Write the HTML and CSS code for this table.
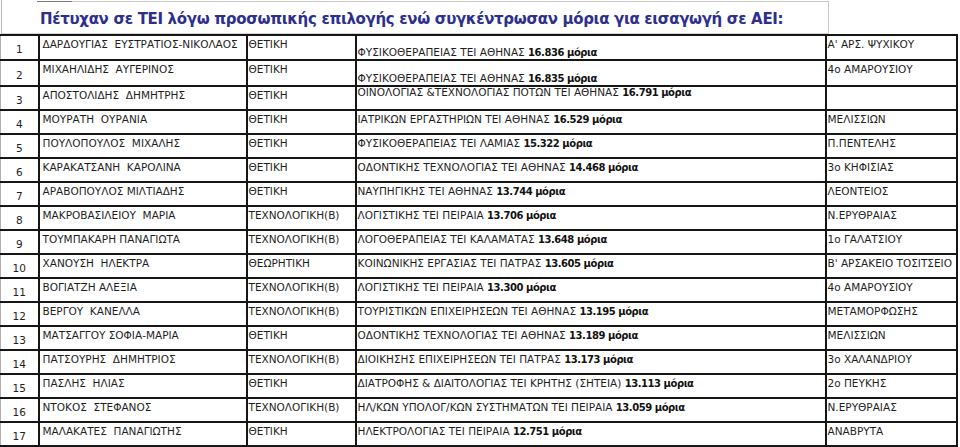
FILE: index.html
```html
<!DOCTYPE html>
<html lang="el">
<head>
<meta charset="utf-8">
<title>Πέτυχαν σε ΤΕΙ</title>
<link rel="stylesheet" href="styles.css">
</head>
<body>
<div class="page">
  <div class="header">
    <div class="title-box">
      <h1 class="title">Πέτυχαν σε ΤΕΙ λόγω προσωπικής επιλογής ενώ συγκέντρωσαν μόρια για εισαγωγή σε ΑΕΙ:</h1>
    </div>
  </div>
  <table class="results">
    <colgroup>
      <col class="c-num"><col class="c-name"><col class="c-dir"><col class="c-school"><col class="c-lyc">
    </colgroup>
    <tbody>
      <tr><td class="num">1</td><td class="txt">ΔΑΡΔΟΥΓΙΑΣ  ΕΥΣΤΡΑΤΙΟΣ-ΝΙΚΟΛΑΟΣ</td><td class="dir">ΘΕΤΙΚΗ</td><td class="school low">ΦΥΣΙΚΟΘΕΡΑΠΕΙΑΣ ΤΕΙ ΑΘΗΝΑΣ <b>16.836 μόρια</b></td><td class="lyc">Α' ΑΡΣ. ΨΥΧΙΚΟΥ</td></tr>
      <tr><td class="num">2</td><td class="txt">ΜΙΧΑΗΛΙΔΗΣ  ΑΥΓΕΡΙΝΟΣ</td><td class="dir">ΘΕΤΙΚΗ</td><td class="school lower">ΦΥΣΙΚΟΘΕΡΑΠΕΙΑΣ ΤΕΙ ΑΘΗΝΑΣ <b>16.835 μόρια</b></td><td class="lyc">4ο ΑΜΑΡΟΥΣΙΟΥ</td></tr>
      <tr><td class="num">3</td><td class="txt">ΑΠΟΣΤΟΛΙΔΗΣ  ΔΗΜΗΤΡΗΣ</td><td class="dir">ΘΕΤΙΚΗ</td><td class="school high">ΟΙΝΟΛΟΓΙΑΣ &amp;ΤΕΧΝΟΛΟΓΙΑΣ ΠΟΤΩΝ ΤΕΙ ΑΘΗΝΑΣ <b>16.791 μόρια</b></td><td class="lyc"></td></tr>
      <tr><td class="num">4</td><td class="txt">ΜΟΥΡΑΤΗ  ΟΥΡΑΝΙΑ</td><td class="dir">ΘΕΤΙΚΗ</td><td class="school">ΙΑΤΡΙΚΩΝ ΕΡΓΑΣΤΗΡΙΩΝ ΤΕΙ ΑΘΗΝΑΣ <b>16.529 μόρια</b></td><td class="lyc">ΜΕΛΙΣΣΙΩΝ</td></tr>
      <tr><td class="num">5</td><td class="txt">ΠΟΥΛΟΠΟΥΛΟΣ  ΜΙΧΑΛΗΣ</td><td class="dir">ΘΕΤΙΚΗ</td><td class="school">ΦΥΣΙΚΟΘΕΡΑΠΕΙΑΣ ΤΕΙ ΛΑΜΙΑΣ <b>15.322 μόρια</b></td><td class="lyc">Π.ΠΕΝΤΕΛΗΣ</td></tr>
      <tr><td class="num">6</td><td class="txt">ΚΑΡΑΚΑΤΣΑΝΗ  ΚΑΡΟΛΙΝΑ</td><td class="dir">ΘΕΤΙΚΗ</td><td class="school">ΟΔΟΝΤΙΚΗΣ ΤΕΧΝΟΛΟΓΙΑΣ ΤΕΙ ΑΘΗΝΑΣ <b>14.468 μόρια</b></td><td class="lyc">3ο ΚΗΦΙΣΙΑΣ</td></tr>
      <tr><td class="num">7</td><td class="txt">ΑΡΑΒΟΠΟΥΛΟΣ ΜΙΛΤΙΑΔΗΣ</td><td class="dir">ΘΕΤΙΚΗ</td><td class="school">ΝΑΥΠΗΓΙΚΗΣ ΤΕΙ ΑΘΗΝΑΣ <b>13.744 μόρια</b></td><td class="lyc">ΛΕΟΝΤΕΙΟΣ</td></tr>
      <tr><td class="num">8</td><td class="txt">ΜΑΚΡΟΒΑΣΙΛΕΙΟΥ  ΜΑΡΙΑ</td><td class="dir">ΤΕΧΝΟΛΟΓΙΚΗ(Β)</td><td class="school">ΛΟΓΙΣΤΙΚΗΣ ΤΕΙ ΠΕΙΡΑΙΑ <b>13.706 μόρια</b></td><td class="lyc">Ν.ΕΡΥΘΡΑΙΑΣ</td></tr>
      <tr><td class="num">9</td><td class="txt">ΤΟΥΜΠΑΚΑΡΗ ΠΑΝΑΓΙΩΤΑ</td><td class="dir">ΤΕΧΝΟΛΟΓΙΚΗ(Β)</td><td class="school">ΛΟΓΟΘΕΡΑΠΕΙΑΣ ΤΕΙ ΚΑΛΑΜΑΤΑΣ <b>13.648 μόρια</b></td><td class="lyc">1ο ΓΑΛΑΤΣΙΟΥ</td></tr>
      <tr><td class="num">10</td><td class="txt">ΧΑΝΟΥΣΗ  ΗΛΕΚΤΡΑ</td><td class="dir">ΘΕΩΡΗΤΙΚΗ</td><td class="school">ΚΟΙΝΩΝΙΚΗΣ ΕΡΓΑΣΙΑΣ ΤΕΙ ΠΑΤΡΑΣ <b>13.605 μόρια</b></td><td class="lyc">Β' ΑΡΣΑΚΕΙΟ ΤΟΣΙΤΣΕΙΟ</td></tr>
      <tr><td class="num">11</td><td class="txt">ΒΟΓΙΑΤΖΗ ΑΛΕΞΙΑ</td><td class="dir">ΤΕΧΝΟΛΟΓΙΚΗ(Β)</td><td class="school">ΛΟΓΙΣΤΙΚΗΣ ΤΕΙ ΠΕΙΡΑΙΑ <b>13.300 μόρια</b></td><td class="lyc">4ο ΑΜΑΡΟΥΣΙΟΥ</td></tr>
      <tr><td class="num">12</td><td class="txt">ΒΕΡΓΟΥ  ΚΑΝΕΛΛΑ</td><td class="dir">ΤΕΧΝΟΛΟΓΙΚΗ(Β)</td><td class="school">ΤΟΥΡΙΣΤΙΚΩΝ ΕΠΙΧΕΙΡΗΣΕΩΝ ΤΕΙ ΑΘΗΝΑΣ <b>13.195 μόρια</b></td><td class="lyc">ΜΕΤΑΜΟΡΦΩΣΗΣ</td></tr>
      <tr><td class="num">13</td><td class="txt">ΜΑΤΣΑΓΓΟΥ ΣΟΦΙΑ-ΜΑΡΙΑ</td><td class="dir">ΘΕΤΙΚΗ</td><td class="school">ΟΔΟΝΤΙΚΗΣ ΤΕΧΝΟΛΟΓΙΑΣ ΤΕΙ ΑΘΗΝΑΣ <b>13.189 μόρια</b></td><td class="lyc">ΜΕΛΙΣΣΙΩΝ</td></tr>
      <tr><td class="num">14</td><td class="txt">ΠΑΤΣΟΥΡΗΣ  ΔΗΜΗΤΡΙΟΣ</td><td class="dir">ΤΕΧΝΟΛΟΓΙΚΗ(Β)</td><td class="school">ΔΙΟΙΚΗΣΗΣ ΕΠΙΧΕΙΡΗΣΕΩΝ ΤΕΙ ΠΑΤΡΑΣ <b>13.173 μόρια</b></td><td class="lyc">3ο ΧΑΛΑΝΔΡΙΟΥ</td></tr>
      <tr><td class="num">15</td><td class="txt">ΠΑΣΛΗΣ  ΗΛΙΑΣ</td><td class="dir">ΘΕΤΙΚΗ</td><td class="school">ΔΙΑΤΡΟΦΗΣ &amp; ΔΙΑΙΤΟΛΟΓΙΑΣ ΤΕΙ ΚΡΗΤΗΣ (ΣΗΤΕΙΑ) <b>13.113 μόρια</b></td><td class="lyc">2ο ΠΕΥΚΗΣ</td></tr>
      <tr><td class="num">16</td><td class="txt">ΝΤΟΚΟΣ  ΣΤΕΦΑΝΟΣ</td><td class="dir">ΤΕΧΝΟΛΟΓΙΚΗ(Β)</td><td class="school">ΗΛ/ΚΩΝ ΥΠΟΛΟΓ/ΚΩΝ ΣΥΣΤΗΜΑΤΩΝ ΤΕΙ ΠΕΙΡΑΙΑ <b>13.059 μόρια</b></td><td class="lyc">Ν.ΕΡΥΘΡΑΙΑΣ</td></tr>
      <tr><td class="num">17</td><td class="txt">ΜΑΛΑΚΑΤΕΣ  ΠΑΝΑΓΙΩΤΗΣ</td><td class="dir">ΘΕΤΙΚΗ</td><td class="school">ΗΛΕΚΤΡΟΛΟΓΙΑΣ ΤΕΙ ΠΕΙΡΑΙΑ <b>12.751 μόρια</b></td><td class="lyc">ΑΝΑΒΡΥΤΑ</td></tr>
    </tbody>
  </table>
</div>
</body>
</html>
```

FILE: styles.css
```css
html, body {
  margin: 0;
  padding: 0;
  background: #ffffff;
}

.page {
  width: 957px;
  font-family: "DejaVu Sans", Verdana, sans-serif;
  color: #1e1e1e;
}

.header {
  width: 828px;
  height: 34px;
  border-left: 1px solid #b8b8b8;
  border-bottom: 1px solid #d0d0d0;
  margin-left: 1px;
  box-sizing: border-box;
  padding-top: 1px;
}

.title-box {
  margin-left: 35px;
  height: 32px;
  box-sizing: border-box;
  border-top: 1px solid #c8c8c8;
  border-right: 1px solid #c8c8c8;
  position: relative;
}

.title-box::before {
  content: "";
  position: absolute;
  left: 0;
  top: -1px;
  width: 35px;
  height: 1px;
  background: #7a7a7a;
}

.title {
  margin: 0;
  padding: 8px 0 0 3px;
  font-size: 15px;
  line-height: 18px;
  letter-spacing: -0.33px;
  font-weight: bold;
  color: #2d2f8e;
  white-space: nowrap;
}

.results {
  border-collapse: collapse;
  table-layout: fixed;
  width: 956px;
  margin-top: 0;
  font-size: 10.5px;
  line-height: 12px;
}

.c-num { width: 38px; }
.c-name { width: 208px; }
.c-dir { width: 109px; }
.c-school { width: 470px; }
.c-lyc { width: 131px; }

.results td {
  height: 22px;
  border: 2px solid #161616;
  padding: 2px 0 0 0;
  vertical-align: top;
  white-space: pre;
  overflow: hidden;
  box-sizing: border-box;
}

.results tr { height: 24px; }

.results td.num {
  border-left: 1px solid #b0b0b0;
  text-align: center;
  vertical-align: middle;
  padding: 3px 0 0 0;
}

.results td.txt { padding-left: 3px; }
.results td.dir { padding-left: 1px; }
.results td.school { padding-left: 1px; }
.results td.lyc { padding-left: 1px; }

.results td.school.low {
  padding-top: 10px;
}

.results td.school.lower {
  padding-top: 11px;
}

.results td.school.high {
  padding-top: 0;
  line-height: 10px;
}

.results b {
  font-weight: bold;
  font-size: 10px;
  letter-spacing: -0.45px;
  color: #111;
}
```
